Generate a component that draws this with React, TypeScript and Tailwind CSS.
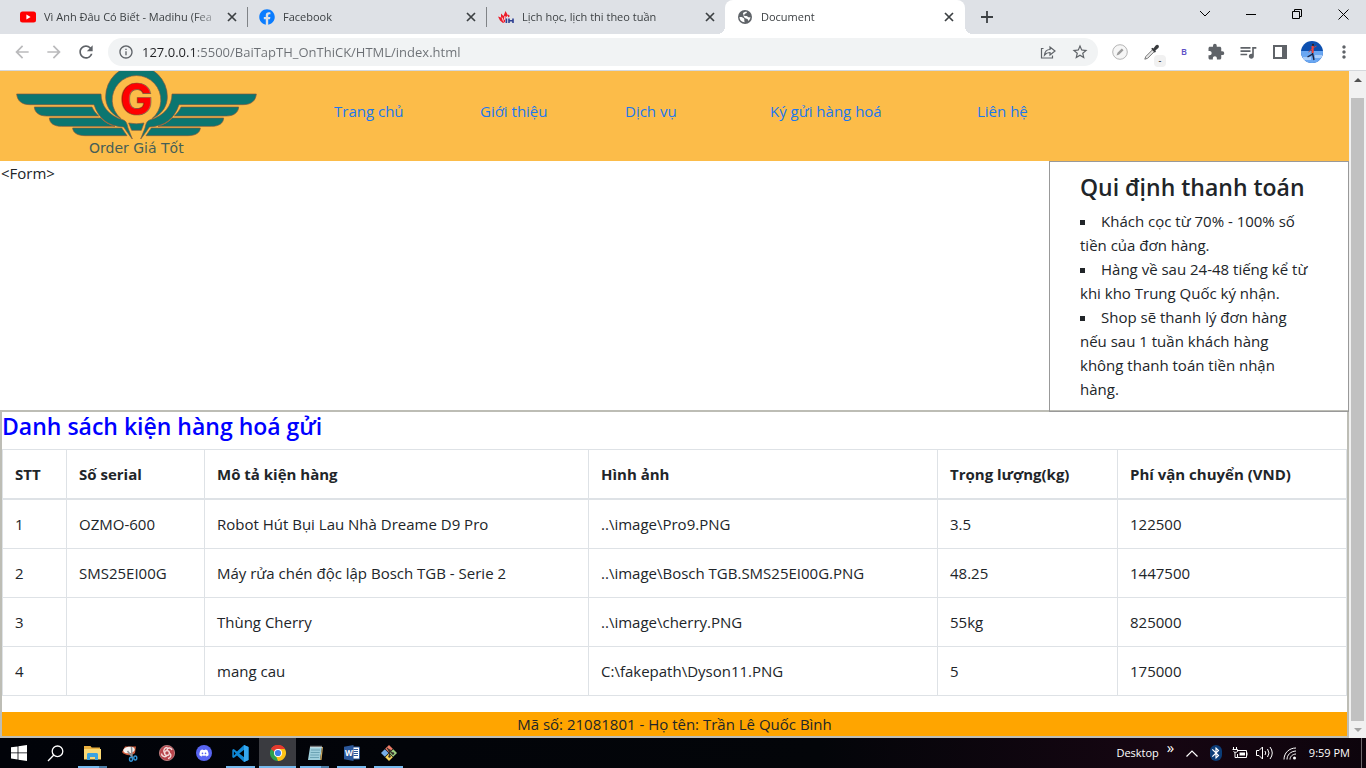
import React from "react";
import {
  MdArrowBack,
  MdArrowForward,
  MdRefresh,
  MdInfoOutline,
  MdStarBorder,
  MdExtension,
  MdQueueMusic,
  MdMoreVert,
  MdBluetooth,
} from "react-icons/md";
import { FaDiscord, FaFacebook } from "react-icons/fa";

/* ---------- Browser tab strip ---------- */

function YoutubeIcon() {
  return (
    <svg viewBox="0 0 16 16" className="size-4">
      <rect x="0" y="2.5" width="16" height="11" rx="2.5" fill="#f00" />
      <path d="M6.4 5.6v4.8L10.6 8z" fill="#fff" />
    </svg>
  );
}

function SchoolIcon() {
  return (
    <svg viewBox="0 0 16 16" className="size-4">
      <path d="M7.5 2 10 6.500 7.500 8.500 7 13 5 14 2 11.500 0 7.500 3 8.500 3 4.500 5.500 7z" fill="#ec1c2b" />
      <path d="M4 8.500l1.500 4M7 7l-.8 4" stroke="#fff" strokeWidth=".8" />
      <path d="M8.400 9.500v4.500M11 9.500v4.500M15 9.500v4.500M11 11.700h4" stroke="#2c3e91" strokeWidth="1.600" fill="none" />
      <path d="M10 5.500l2 1.500-2 1.400z" fill="#ec1c2b" />
    </svg>
  );
}

function GlobeIcon() {
  return (
    <svg viewBox="0 0 16 16" className="size-4">
      <circle cx="8" cy="8" r="7" fill="#5f6368" />
      <path d="M2.5 8c1.8-.3 3.7.1 4.600 1.500.6 1.200-.2 2 .6 3.700-3 .1-5.200-2.100-5.200-5.200zM6 4.200c1-1.300 2.500-1.800 4.100-1.300-.3.9-.8 1.500-2 1.700-.3 1.100-.9 1.400-1.900 1.200.5 1 1.600 1.300 3.100 1.100 1.300-.1 1.600 1.300 2.800 1.400.6.1 1 .1 1.400 0-.2 1.400-1 2.800-2.200 3.700-.1-1.300-.6-2-1.700-2.200C7.800 9.500 6 7.500 6 4.200z" fill="#fff" />
    </svg>
  );
}

function CloseIcon() {
  return (
    <svg viewBox="0 0 10 10" className="size-[10px]" stroke="currentColor" strokeWidth="1.700">
      <path d="M1 1l8 8M9 1L1 9" />
    </svg>
  );
}

type Tab = { title: string; icon: React.ReactNode; active?: boolean; divided?: boolean };

const tabs: Tab[] = [
  { title: "Vì Anh Đâu Có Biết - Madihu (Fea", icon: <YoutubeIcon /> },
  { title: "Facebook", icon: <FaFacebook className="size-4 text-[#0a7cff]" />, divided: true },
  { title: "Lịch học, lịch thi theo tuần", icon: <SchoolIcon />, divided: true },
  { title: "Document", icon: <GlobeIcon />, active: true },
];

function TabStrip() {
  return (
    <div className="flex h-[34px] items-stretch bg-[#dee1e6] pl-2">
      {tabs.map((tab) => (
        <div
          key={tab.title}
          className={
            tab.active
              ? "relative flex w-60 items-center gap-2 rounded-t-lg bg-white pl-3 pr-[11px]"
              : "relative flex w-[239px] items-center gap-2 pl-3 pr-[10px]"
          }
        >
          {tab.divided && <span className="absolute left-0 top-[7px] h-5 w-px bg-[#808387]" />}
          {tab.active && (
            <>
              <span className="absolute bottom-0 -left-2 size-2 bg-[radial-gradient(circle_at_0_0,#dee1e6_8px,#fff_8px)]" />
              <span className="absolute bottom-0 -right-2 size-2 bg-[radial-gradient(circle_at_100%_0,#dee1e6_8px,#fff_8px)]" />
            </>
          )}
          <span className="shrink-0">{tab.icon}</span>
          <span className="min-w-0 flex-1 whitespace-nowrap text-[11px] leading-4 text-[#3c4043] [mask-image:linear-gradient(to_right,#000_150px,transparent_178px)]">
            {tab.title}
          </span>
          <button type="button" aria-label={"Close " + tab.title} className="shrink-0 text-[#3c4043]">
            <CloseIcon />
          </button>
        </div>
      ))}
      <button type="button" aria-label="New tab" className="ml-2 flex w-7 items-center justify-center text-[#3c4043]">
        <svg viewBox="0 0 12 12" className="size-3" stroke="currentColor" strokeWidth="1.800">
          <path d="M6 0v12M0 6h12" />
        </svg>
      </button>
      <div className="ml-auto flex h-7 text-black">
        <button type="button" aria-label="Search tabs" className="flex w-[46px] items-center justify-center">
          <svg viewBox="0 0 12 8" className="w-3" fill="none" stroke="currentColor">
            <path d="M1 1l5 5 5-5" />
          </svg>
        </button>
        <button type="button" aria-label="Minimize" className="flex w-[46px] items-center justify-center">
          <span className="h-px w-[10px] bg-black" />
        </button>
        <button type="button" aria-label="Restore" className="flex w-[46px] items-center justify-center">
          <svg viewBox="0 0 10 10" className="size-[10px]" fill="none" stroke="currentColor">
            <path d="M.5 2.500h7v7h-7zM2.500 2.500v-2h7v7h-2" />
          </svg>
        </button>
        <button type="button" aria-label="Close window" className="flex w-[46px] items-center justify-center">
          <svg viewBox="0 0 11 11" className="size-[11px]" stroke="currentColor">
            <path d="M.5.5l10 10M10.500.5l-10 10" />
          </svg>
        </button>
      </div>
    </div>
  );
}

/* ---------- Browser toolbar ---------- */

function ToolButton({ label, children }: { label: string; children: React.ReactNode }) {
  return (
    <button type="button" aria-label={label} className="flex h-7 w-8 shrink-0 items-center justify-center text-[#5f6368]">
      {children}
    </button>
  );
}

function Toolbar() {
  return (
    <div className="flex h-[37px] items-center border-b border-[#d5d8dc] bg-white pb-px pl-[6px] pr-[6px]">
      <div className="mr-[6px] flex">
        <button type="button" aria-label="Back" className="flex w-8 items-center justify-center text-[#bababc]">
          <MdArrowBack className="size-5" />
        </button>
        <button type="button" aria-label="Forward" className="flex w-8 items-center justify-center text-[#bababc]">
          <MdArrowForward className="size-5" />
        </button>
        <ToolButton label="Reload">
          <MdRefresh className="size-5" />
        </ToolButton>
      </div>
      <div className="mr-[6px] flex h-7 min-w-0 flex-1 items-center rounded-full bg-[#f1f3f4] pl-[10px] pr-[2px]">
        <MdInfoOutline className="mr-2 size-4 shrink-0 text-[#5f6368]" />
        <input
          aria-label="Address"
          defaultValue="127.0.0.1:5500/BaiTapTH_OnThiCK/HTML/index.html"
          className="min-w-0 flex-1 bg-[linear-gradient(to_right,#202124_55px,#6b6f74_55px)] bg-clip-text text-[13px] leading-5 text-transparent outline-none"
        />
        <ToolButton label="Share">
          <svg viewBox="0 0 16 16" className="size-4" fill="none" stroke="currentColor" strokeWidth="1.200">
            <path d="M3.500 4.500H1.500v9.500h11v-2.500" />
            <path d="M4.500 11c.4-3.600 2.400-5.400 5.500-5.500V3l5 4-5 4V8.500C7.500 8.500 6 9.200 4.500 11z" />
          </svg>
        </ToolButton>
        <ToolButton label="Bookmark">
          <MdStarBorder className="size-[18px]" />
        </ToolButton>
      </div>
      <ToolButton label="Pen extension">
        <svg viewBox="0 0 16 16" className="size-4">
          <circle cx="8" cy="8" r="7.300" fill="#f6f6f6" stroke="#b5b5b5" />
          <path d="M4.500 11.500l1-2.700 4.300-4.300 1.700 1.700-4.300 4.300z" fill="#9b9b9b" />
        </svg>
      </ToolButton>
      <ToolButton label="Color picker extension">
        <span className="relative">
          <svg viewBox="0 0 16 16" className="size-4">
            <path d="M.8 15.200l1-2.700L8.500 5.800l1.800 1.800-6.700 6.700z" fill="#e8e8e8" stroke="#777" />
            <path d="M7.200 4.800l1.200-1 1 .6 2.300-2.900c2-1.800 4.300.5 2.600 2.500l-2.900 2.600.5 1-1.100 1.200z" fill="#383b3e" />
          </svg>
          <span className="absolute -bottom-[7px] -right-[6px] flex h-3 w-3 items-center justify-center rounded-sm bg-[#f1f1f1] text-[9px] leading-3 text-black">
            -
          </span>
        </span>
      </ToolButton>
      <ToolButton label="B extension">
        <span className="text-[9px] font-semibold text-[#5d50c6]">B</span>
      </ToolButton>
      <ToolButton label="Extensions">
        <MdExtension className="size-[18px]" />
      </ToolButton>
      <ToolButton label="Media">
        <MdQueueMusic className="size-5" />
      </ToolButton>
      <ToolButton label="Side panel">
        <svg viewBox="0 0 14 14" className="size-[14px]">
          <path d="M1 1h12v12H1z" fill="none" stroke="currentColor" strokeWidth="2" />
          <path d="M9 1h5v12H9z" fill="currentColor" />
        </svg>
      </ToolButton>
      <ToolButton label="Profile">
        <svg viewBox="0 0 22 22" className="size-[22px]">
          <defs>
            <clipPath id="avatar">
              <circle cx="11" cy="11" r="11" />
            </clipPath>
          </defs>
          <g clipPath="url(#avatar)">
            <path d="M0 0h22v22H0z" fill="#0c50b0" />
            <path d="M0 10h22v12H0z" fill="#6aa7f2" />
            <path d="M2 16h8v3H2zM14 14h7v3h-7z" fill="#a9cdfa" />
            <path d="M11.500 10v3l-5 3M11.500 12l1.500 7" stroke="#1b2444" strokeWidth="1.400" fill="none" />
            <path d="M11 8l-3.500 3M12 7l3.500-2" stroke="#b5474a" strokeWidth="1" fill="none" />
            <path d="M10.500 5h2.200v7h-2z" fill="#f0463c" />
            <circle cx="12" cy="3.800" r="1.100" fill="#33221f" />
          </g>
        </svg>
      </ToolButton>
      <ToolButton label="Menu">
        <MdMoreVert className="size-5" />
      </ToolButton>
    </div>
  );
}

/* ---------- Site ---------- */

function WingStrips() {
  return (
    <g fill="#0b7670" stroke="#80563f" strokeWidth="2">
      <path d="M50 84H303C303 118 325 150 370 162C378 165 381 172 384 186L397 219C388 208 380 197 371 183C325 180 297 160 282 116H90C64 116 52 104 50 84Z" />
      <path d="M103 123H276C281 134 287 142 296 150H140C118 150 104 140 103 123Z" />
      <path d="M148 156H302C315 169 327 176 345 181H185C162 181 149 172 148 156Z" />
      <path d="M218 186H365L381 209H255C232 209 219 200 218 186Z" />
    </g>
  );
}

function Logo() {
  return (
    <svg viewBox="45 15 735 270" className="block h-[90px] w-[245px] shrink-0" role="img" aria-label="Order Giá Tốt">
      <WingStrips />
      <g transform="translate(819 0) scale(-1 1)">
        <WingStrips />
      </g>
      <path d="M386 171Q409 176 432 171L424 193H395Z" fill="#0b7670" stroke="#80563f" strokeWidth="2" />
      <path
        d="M363 158C328 142 317 115 317 92A92 92 0 0 1 502 92C502 115 491 142 456 158A73 73 0 1 0 363 158Z"
        fill="#0b7670"
        stroke="#80563f"
        strokeWidth="2"
      />
      <text
        x="409"
        y="148"
        textAnchor="middle"
        fontSize="130"
        fill="#ff0000"
        stroke="#80563f"
        strokeWidth="2"
        className="font-[family-name:Inter] font-extrabold"
      >
        G
      </text>
      <text x="409" y="261" textAnchor="middle" fontSize="42" fill="#465f57" className="font-[family-name:'DejaVu_Sans']">
        Order Giá Tốt
      </text>
    </svg>
  );
}

const navItems = ["Trang chủ", "Giới thiệu", "Dịch vụ", "Ký gửi hàng hoá", "Liên hệ"];

const rules = [
  "Khách cọc từ 70% - 100% số tiền của đơn hàng.",
  "Hàng về sau 24-48 tiếng kể từ khi kho Trung Quốc ký nhận.",
  "Shop sẽ thanh lý đơn hàng nếu sau 1 tuần khách hàng không thanh toán tiền nhận hàng.",
];

const columns = ["STT", "Số serial", "Mô tả kiện hàng", "Hình ảnh", "Trọng lượng(kg)", "Phí vận chuyển (VND)"];

const rows = [
  ["1", "OZMO-600", "Robot Hút Bụi Lau Nhà Dreame D9 Pro", "..\\image\\Pro9.PNG", "3.5", "122500"],
  ["2", "SMS25EI00G", "Máy rửa chén độc lập Bosch TGB - Serie 2", "..\\image\\Bosch TGB.SMS25EI00G.PNG", "48.25", "1447500"],
  ["3", "", "Thùng Cherry", "..\\image\\cherry.PNG", "55kg", "825000"],
  ["4", "", "mang cau", "C:\\fakepath\\Dyson11.PNG", "5", "175000"],
];

function Site() {
  return (
    <div className="flex min-w-0 flex-1 flex-col bg-white text-[15px] leading-6 text-[#212529]">
      <header className="flex bg-[#fcbc49] pl-[15px]">
        <Logo />
        <nav className="ml-[74px] pt-7">
          <ul className="grid grid-cols-[146px_145px_145px_207px_auto]">
            {navItems.map((item) => (
              <li key={item}>
                <a href="#" className="text-[#1a78f0]">
                  {item}
                </a>
              </li>
            ))}
          </ul>
        </nav>
      </header>

      <div className="flex">
        <main className="min-w-0 flex-1 pl-px">&lt;Form&gt;</main>
        <aside className="relative -mb-[2px] w-[300px] border border-[#999] pb-[10px] pl-[30px] pr-[38px] pt-[11px]">
          <h2 className="mb-[7px] whitespace-nowrap text-[23px] font-semibold leading-[29px]">Qui định thanh toán</h2>
          <ul className="list-inside list-[square]">
            {rules.map((rule) => (
              <li key={rule} className="marker:text-[#212529]">
                {rule}
              </li>
            ))}
          </ul>
        </aside>
      </div>

      <section className="flex flex-1 flex-col border-2 border-[#bdbdb5]">
        <h2 className="mb-2 text-[23px] font-semibold leading-[29px] text-[#0000ff]">Danh sách kiện hàng hoá gửi</h2>
        <table className="mb-4 w-full table-fixed border-collapse text-left">
          <colgroup>
            <col className="w-[64px]" />
            <col className="w-[138px]" />
            <col className="w-[384px]" />
            <col className="w-[349px]" />
            <col className="w-[180px]" />
            <col />
          </colgroup>
          <thead>
            <tr>
              {columns.map((column) => (
                <th key={column} scope="col" className="border border-b-2 border-[#dee2e6] px-3 py-3 font-bold">
                  {column}
                </th>
              ))}
            </tr>
          </thead>
          <tbody>
            {rows.map((row) => (
              <tr key={row[0]}>
                {row.map((cell, index) => (
                  <td key={columns[index]} className="border border-[#dee2e6] px-3 py-3">
                    {cell}
                  </td>
                ))}
              </tr>
            ))}
          </tbody>
        </table>
        <footer className="mt-auto bg-[#ffa500] text-center">Mã số: 21081801 - Họ tên: Trần Lê Quốc Bình</footer>
      </section>
    </div>
  );
}

function Scrollbar() {
  return (
    <div aria-hidden="true" className="flex w-[17px] shrink-0 flex-col items-center bg-[#f1f1f1]">
      <div className="flex h-[17px] items-center pt-px">
        <svg viewBox="0 0 8 4" className="w-2">
          <path d="M0 4l4-4 4 4z" fill="#505050" />
        </svg>
      </div>
      <div className="mt-[10px] w-[13px] flex-1 bg-[#c1c1c1]" />
      <div className="flex h-[17px] items-center">
        <svg viewBox="0 0 8 4" className="w-2">
          <path d="M0 0l4 4 4-4z" fill="#a3a3a3" />
        </svg>
      </div>
    </div>
  );
}

/* ---------- Taskbar ---------- */

const startIcon = (
  <svg viewBox="0 0 16 16" className="size-4" fill="#fff">
    <path d="M0 2.300l6.600-.9v6.100H0zM7.400 1.300L16 0v7.500H7.400zM0 8.300h6.600v6.200L0 13.600zM7.400 8.300H16V16l-8.600-1.300z" />
  </svg>
);

const searchIcon = (
  <svg viewBox="0 0 17 17" className="size-[17px]" fill="none" stroke="#fff" strokeWidth="1.300">
    <circle cx="10.500" cy="6.300" r="5.300" />
    <path d="M6.800 10L1 16" />
  </svg>
);

const explorerIcon = (
  <svg viewBox="0 0 17 16" className="h-4 w-[17px]">
    <path d="M0 1h6.500l1.200 1.500H16V14H0z" fill="#e9b040" />
    <path d="M0 4h17v10.500H0z" fill="#fbd974" />
    <path d="M3 15V9.500C3 8.600 3.600 8 4.500 8h8c.9 0 1.500.6 1.500 1.500V15h-3v-3H6v3z" fill="#3ba3e0" />
  </svg>
);

const snipIcon = (
  <svg viewBox="0 0 17 17" className="size-[17px]">
    <path d="M1 7L4 1.500h11L14 8c-3 3-10 3-13-1z" fill="#cf5a3a" />
    <ellipse cx="8" cy="5" rx="5.800" ry="3.300" fill="#f7f4f1" transform="rotate(-8 8 5)" />
    <path d="M6.500 6l5.500 7M10.500 2l.5 10" stroke="#8d9196" strokeWidth="1.500" />
    <g fill="none" stroke="#3293d5" strokeWidth="1.400">
      <ellipse cx="10" cy="14.300" rx="1.500" ry="2" />
      <ellipse cx="14.300" cy="13" rx="1.500" ry="2" />
    </g>
  </svg>
);

const spiralIcon = (
  <svg viewBox="0 0 16 16" className="size-4">
    <circle cx="8" cy="8" r="7.600" fill="#b8444b" stroke="#c98a8c" strokeWidth=".8" />
    <g fill="none" stroke="#f4dcdc" strokeWidth="1.400">
      <path d="M8 5.500C8 2.500 12 2 13 5M10.500 8c2.500 1.500 1.500 5-1.500 5.500M8 10.500c-2 2.500-5.500.5-5.500-2M5.500 8C3.500 5.500 6 2 8.500 2.500" />
      <circle cx="8" cy="8" r="2.400" />
    </g>
  </svg>
);

const discordIcon = (
  <span className="flex size-4 items-center justify-center rounded-full bg-[#5865f2]">
    <FaDiscord className="size-[10px] text-white" />
  </span>
);

const codeIcon = (
  <svg viewBox="0 0 17 17" className="size-[17px]">
    <path d="M12 0l4.500 2v13L12 17 5 10.500 1.700 13 .3 12.200V4.800L1.700 4 5 6.500zM12.200 4.700L7.300 8.500l4.900 3.800zM1.900 6.600v3.800l1.900-1.900z" fill="#1089d6" fillRule="evenodd" />
    <path d="M12 0l4.500 2v13L12 17z" fill="#35a8f0" />
  </svg>
);

const chromeIcon = (
  <svg viewBox="0 0 16 16" className="size-4">
    <path d="M8 8L1.070 4A8 8 0 0 1 14.930 4z" fill="#e33b2e" />
    <path d="M8 8l6.930-4A8 8 0 0 1 8 16z" fill="#fbc116" />
    <path d="M8 8v8A8 8 0 0 1 1.070 4z" fill="#2da04d" />
    <path d="M8 4h6.930l-3.500 6z" fill="#fbc116" />
    <path d="M11.460 10L8 16l-2-5z" fill="#fbc116" />
    <path d="M4.540 10L1.070 4 8 4z" fill="#2da04d" />
    <path d="M1.070 4A8 8 0 0 1 14.930 4H8L4.540 7z" fill="#e33b2e" />
    <circle cx="8" cy="8" r="4" fill="#fff" />
    <circle cx="8" cy="8" r="3.100" fill="#3d7eea" />
  </svg>
);

const notepadIcon = (
  <svg viewBox="0 0 16 16" className="size-4">
    <path d="M3 2h12l-2 13H1z" fill="#9fcfdc" />
    <path d="M13 15l2-13 1 0-1.500 13z" fill="#caa55c" />
    <path d="M4 5h9M3.700 7.500h9M3.300 10h9M3 12.500h9" stroke="#6098a9" strokeWidth=".8" />
    <path d="M3.500 1.800h11" stroke="#eee" strokeWidth="2" strokeDasharray="1 1" />
  </svg>
);

const wordIcon = (
  <svg viewBox="0 0 16 16" className="size-4">
    <path d="M8 2h7.500v12H8z" fill="#fff" stroke="#2b579a" />
    <path d="M9.500 4.500h4.500M9.500 6.500h4.500M9.500 8.500h4.500M9.500 10.500h4.500" stroke="#2b579a" />
    <path d="M0 1.800L9.500 0v16L0 14.200z" fill="#2b579a" />
    <text x="4.800" y="11" textAnchor="middle" fontSize="8" fill="#fff" className="font-bold">
      W
    </text>
  </svg>
);

const gitIcon = (
  <svg viewBox="0 0 16 16" className="size-4">
    <path d="M8 0l3.800 3.800L8 7.600 4.200 3.800z" fill="#ee7d68" />
    <path d="M12.200 4.200L16 8l-3.800 3.800L8.400 8z" fill="#9dcf80" />
    <path d="M3.800 4.200L7.600 8l-3.800 3.800L0 8z" fill="#77aee8" />
    <path d="M8 8.400l3.800 3.800L8 16l-3.800-3.800z" fill="#f4d35c" />
    <path d="M6 3l2.500 2.500V12M8.500 5.500L12 9" stroke="#35302b" strokeWidth="1.200" fill="none" />
    <circle cx="8.500" cy="5.500" r="1.200" fill="#35302b" />
    <circle cx="8.500" cy="11.500" r="1.200" fill="#35302b" />
    <circle cx="12" cy="8.500" r="1.200" fill="#35302b" />
  </svg>
);

type TaskItem = { label: string; icon: React.ReactNode; running?: boolean; stacked?: boolean; focused?: boolean };

const taskItems: TaskItem[] = [
  { label: "Start", icon: startIcon },
  { label: "Search", icon: searchIcon },
  { label: "File Explorer", icon: explorerIcon, running: true, stacked: true },
  { label: "Snipping Tool", icon: snipIcon },
  { label: "Garena", icon: spiralIcon },
  { label: "Discord", icon: discordIcon },
  { label: "Visual Studio Code", icon: codeIcon, running: true },
  { label: "Chrome", icon: chromeIcon, focused: true },
  { label: "Notepad", icon: notepadIcon, running: true, stacked: true },
  { label: "Word", icon: wordIcon, running: true },
  { label: "Git", icon: gitIcon, running: true },
];

function Taskbar() {
  return (
    <div className="flex h-[30px] items-stretch bg-[linear-gradient(to_right,#010309,#030509_60%,#160612_85%,#0d040c)] text-white">
      {taskItems.map((item) => (
        <button
          key={item.label}
          type="button"
          aria-label={item.label}
          className={
            item.focused
              ? "relative flex w-[37px] items-center justify-center bg-[#3a3b40]"
              : "relative flex w-[37px] items-center justify-center"
          }
        >
          {item.icon}
          {item.running && (
            <span className="absolute inset-x-1 bottom-0 flex h-[2px]">
              <span className="flex-1 bg-[#76b9ed]" />
              {item.stacked && <span className="w-2 bg-[#4d7fa8]" />}
            </span>
          )}
          {item.focused && <span className="absolute inset-x-0 bottom-0 h-[2px] bg-[#76b9ed]" />}
        </button>
      ))}
      <div className="ml-auto flex items-center text-[11px] leading-4">
        <span>Desktop</span>
        <span className="mb-3 ml-2 w-[10px] text-[15px] leading-4">»</span>
        <svg viewBox="0 0 12 7" className="ml-[9px] w-3" fill="none" stroke="#fff" strokeWidth="1.200">
          <path d="M.5 6.500L6 1l5.500 5.500" />
        </svg>
        <span className="ml-3 flex h-4 w-3 items-center justify-center rounded-full bg-[#0b3d78]">
          <MdBluetooth className="size-[14px] shrink-0" />
        </span>
        <svg viewBox="0 0 16 12" className="ml-[10px] w-4" fill="none" stroke="#fff">
          <path d="M5.500 3.500h9v7h-9V7M15 5.500v3" />
          <path d="M7.500 5.500h5.500v3H7.500z" fill="#fff" stroke="none" />
          <path d="M1.500 0v2M4.500 0v2M.5 2.500h5v2c0 1-4 1-4 0M3 5v5.500h2.500" />
        </svg>
        <svg viewBox="0 0 17 14" className="ml-2 w-[17px]" fill="none" stroke="#fff">
          <path d="M.5 4.500H3L6.500 1v12L3 9.500H.5zM9 5q1.500 2 0 4M11.500 3q3 4 0 8M14 1q4.500 6 0 12" />
        </svg>
        <svg viewBox="0 0 14 13" className="ml-[10px] w-[14px]" fill="none" stroke="#fff">
          <path d="M1 12.500C1 6 6 1 13 1M4 12.500C4 8 7.500 4.300 13 4M7 12.500C7 9.500 9.500 7.200 13 7" />
          <circle cx="11.500" cy="11" r="1.500" fill="#fff" stroke="none" />
        </svg>
        <span className="ml-3 whitespace-nowrap">9:59 PM</span>
        <span className="ml-[11px] mr-1 h-[30px] w-px bg-[#6d686c]" />
      </div>
    </div>
  );
}

export default function App() {
  return (
    <div className="flex min-h-screen flex-col font-['Open_Sans','Noto_Sans',sans-serif]">
      <TabStrip />
      <Toolbar />
      <div className="flex flex-1">
        <Site />
        <Scrollbar />
      </div>
      <Taskbar />
    </div>
  );
}
